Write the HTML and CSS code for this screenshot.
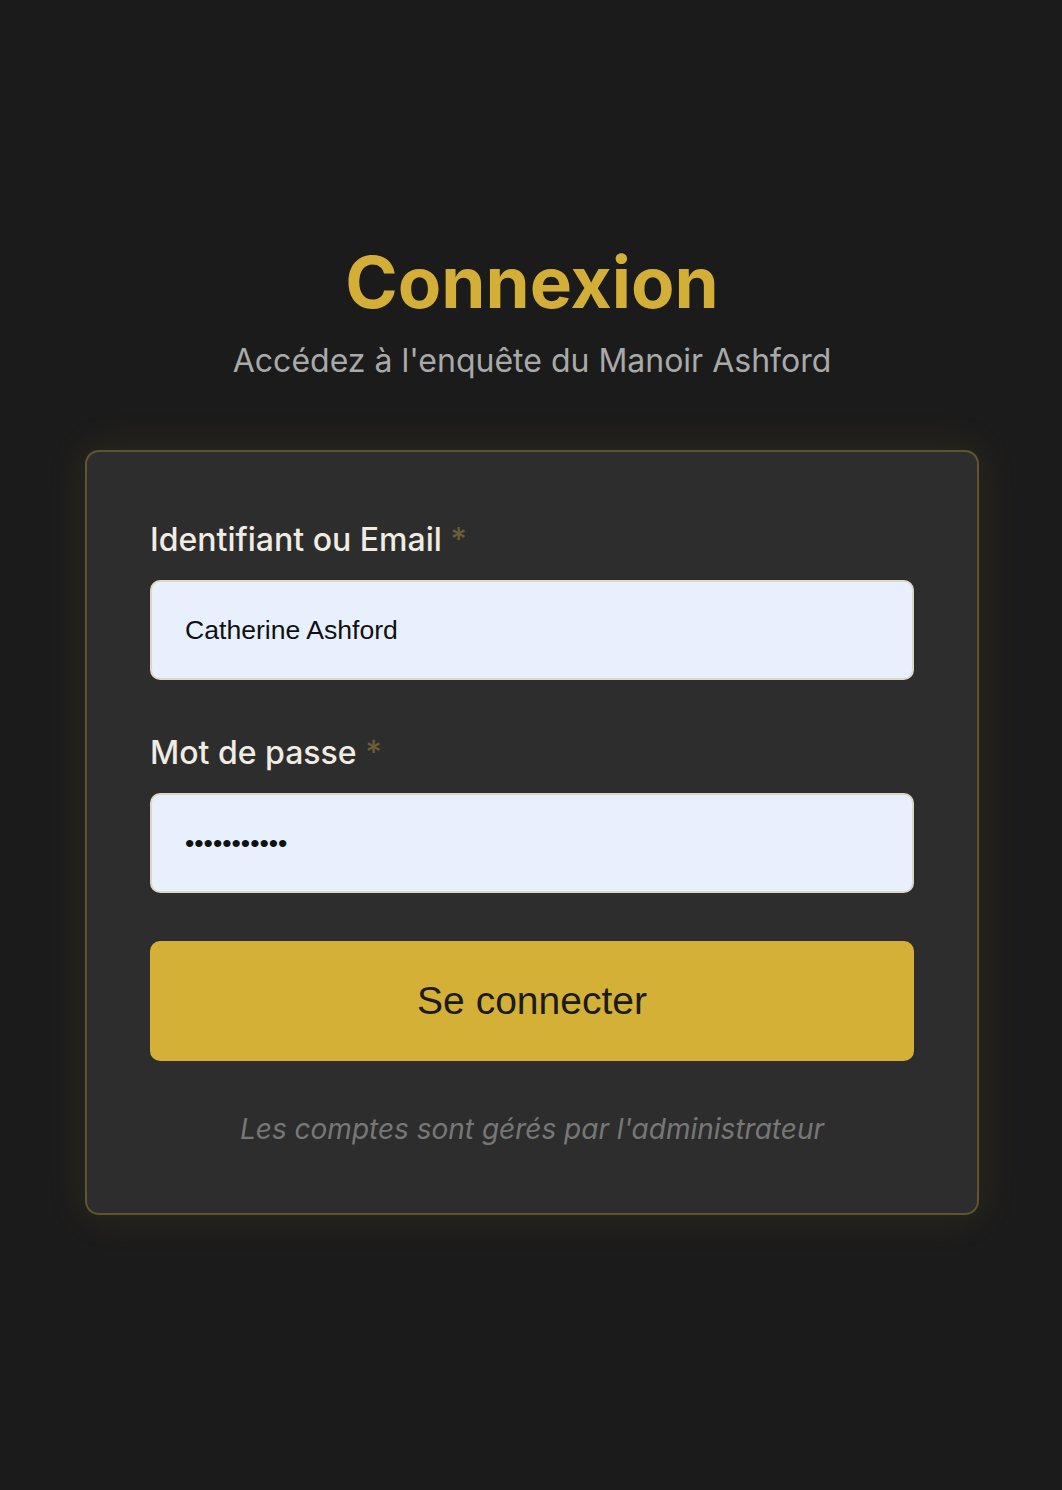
FILE: index.html
```html
<!DOCTYPE html>
<html lang="fr">
<head>
<meta charset="utf-8">
<title>Connexion</title>
<link rel="stylesheet" href="styles.css">
</head>
<body>
<main class="page">
  <header class="intro">
    <h1 class="title">Connexion</h1>
    <p class="subtitle">Accédez à l'enquête du Manoir Ashford</p>
  </header>
  <form class="card">
    <div class="field">
      <label class="label" for="user">Identifiant ou Email <span class="req">*</span></label>
      <input class="input" id="user" type="text" value="Catherine Ashford">
    </div>
    <div class="field">
      <label class="label" for="pass">Mot de passe <span class="req">*</span></label>
      <input class="input" id="pass" type="password" value="abcdefghijk">
    </div>
    <button class="btn" type="button">Se connecter</button>
    <p class="note">Les comptes sont gérés par l'administrateur</p>
  </form>
</main>
</body>
</html>
```
FILE: styles.css
```css
* { box-sizing: border-box; }
html, body { margin: 0; padding: 0; }
body {
  background: #1b1b1b;
  font-family: Inter, "Noto Sans", sans-serif;
  color: #f0ece2;
}
.page {
  min-height: 1490px;
  display: flex;
  flex-direction: column;
  align-items: center;
  padding-top: 242px;
  padding-left: 2px;
}
.intro {
  text-align: center;
  margin-bottom: 67px;
}
.title {
  margin: 0;
  font-size: 71px;
  line-height: 80px;
  font-weight: 700;
  color: #d4af37;
}
.subtitle {
  margin: 17px 0 0;
  font-size: 32px;
  line-height: 44px;
  color: #a9a9a9;
}
.card {
  width: 894px;
  background: #2d2d2d;
  border: 2px solid rgba(212, 175, 55, 0.3);
  border-radius: 14px;
  box-shadow: 0 0 40px rgba(212, 175, 55, 0.12);
  padding: 63px 63px 60px;
  display: flex;
  flex-direction: column;
}
.field {
  display: flex;
  flex-direction: column;
  margin-bottom: 48px;
}
.label {
  font-size: 32px;
  line-height: 50px;
  font-weight: 500;
  color: #f0ece2;
  margin-bottom: 15px;
}
.req { color: #6b5d36; }
.input {
  height: 100px;
  border: 2px solid #ddd8c4;
  border-radius: 10px;
  background: #e8f0fe;
  padding: 0 33px;
  font-family: "Liberation Sans", Arial, sans-serif;
  font-size: 26.6px;
  color: #111;
  outline: none;
}
.btn {
  height: 120px;
  border: none;
  border-radius: 10px;
  background: #d4b037;
  color: #1b1b1b;
  font-family: "Liberation Sans", Arial, sans-serif;
  font-size: 39px;
  cursor: pointer;
}
.note {
  margin: 44px 0 0;
  text-align: center;
  font-style: italic;
  font-size: 28px;
  line-height: 48px;
  color: #777;
}
```
